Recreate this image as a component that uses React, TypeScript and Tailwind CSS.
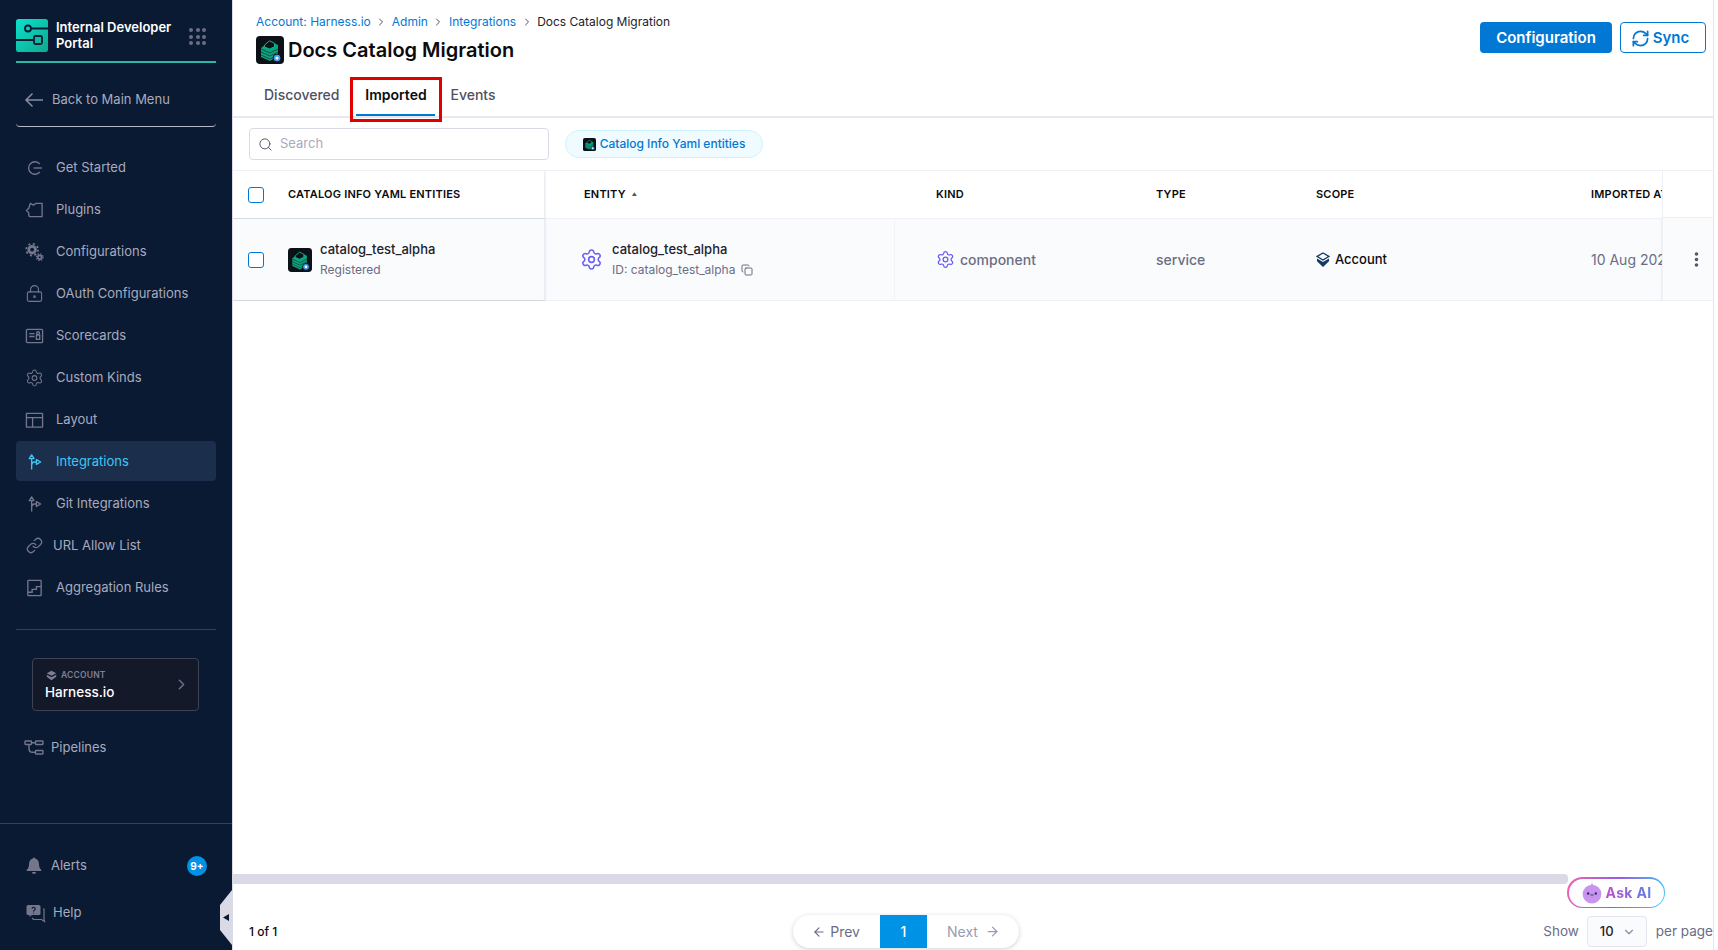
import type { ReactNode } from 'react';
import { ArrowLeft, ArrowRight, ChevronDown, ChevronRight, Copy, EllipsisVertical, Link, LockKeyhole, RefreshCw, Search, Settings } from 'lucide-react';

const iconProps = { width: 20, height: 20, viewBox: '0 0 20 20', fill: 'none', stroke: 'currentColor', strokeWidth: 1.4 };

const GetStartedIcon = () => (
  <svg {...iconProps}>
    <path d="M15.500 5.800A6.600 6.600 0 1 0 15.500 14.200" />
    <path d="M9 10h9" />
  </svg>
);

const PluginIcon = () => (
  <svg {...iconProps}>
    <path d="M5.500 3l3.500 1.800L11.500 3H18v14H5.500A1.500 1.500 0 0 1 4 15.500V13L1.500 10.500 4 8.200z" strokeLinejoin="round" />
  </svg>
);

const CogsIcon = () => (
  <svg width="20" height="20" viewBox="0 0 20 20" fill="none" stroke="currentColor">
    <circle cx="7.500" cy="7.500" r="3.500" strokeWidth="3" />
    <circle cx="7.500" cy="7.500" r="6.200" strokeWidth="1.900" strokeDasharray="2.200 2.670" />
    <circle cx="15.500" cy="15.500" r="2" strokeWidth="1.800" />
    <circle cx="15.500" cy="15.500" r="3.500" strokeWidth="1.400" strokeDasharray="1.400 1.350" />
  </svg>
);

const ScorecardIcon = () => (
  <svg {...iconProps}>
    <rect x="1.500" y="3" width="17" height="14" rx="1" />
    <path d="M4.500 7.500h5.500M4.500 10.500h5.500" />
    <rect x="12" y="9" width="3.500" height="4.500" />
    <circle cx="13.750" cy="7" r="1.500" />
  </svg>
);

const LayoutIcon = () => (
  <svg {...iconProps}>
    <rect x="1.500" y="3" width="17" height="14.500" rx="0.500" />
    <path d="M1.500 7.500h17M8 7.500v10" />
  </svg>
);

const GitIcon = () => (
  <svg {...iconProps}>
    <path d="M7 18V6.500M7 14c0-2.500 1-4 3-4h2" />
    <path d="M4.500 6.500L7 2.500l2.500 4zM12 7.500l4.500 2.500-4.500 2.500z" strokeLinejoin="round" />
  </svg>
);

const AggregationIcon = () => (
  <svg {...iconProps}>
    <rect x="3" y="2" width="14" height="16" rx="0.500" />
    <path d="M3 14.500h4.500v-3H12v-3h5M6 18v-1M10 18v-1" />
  </svg>
);

const PipelinesIcon = () => (
  <svg {...iconProps}>
    <rect x="1" y="3" width="6.500" height="3.500" rx="0.700" />
    <rect x="11.500" y="3" width="7.500" height="3.500" rx="0.700" />
    <rect x="11.500" y="12.500" width="7.500" height="3.500" rx="0.700" />
    <path d="M7.500 4.750h4M5 6.500v4c0 3 1.500 3.800 3.500 3.800h3" />
  </svg>
);

const BellIcon = () => (
  <svg width="18" height="18" viewBox="0 0 18 18" fill="currentColor">
    <path d="M9 .500a1.300 1.300 0 0 0-1.200 1.100C5.300 2.200 4 4.500 4 7.200c0 3-1 4.500-2.300 5.500v1.300h14.600v-1.300C15 11.700 14 10.200 14 7.200c0-2.700-1.300-5-3.800-5.600A1.300 1.300 0 0 0 9 .500z" />
    <path d="M7 15h4a2 2 0 0 1-4 0z" />
  </svg>
);

const HelpIcon = () => (
  <svg width="20" height="20" viewBox="0 0 20 20" fill="none">
    <path d="M2 2h11a1.500 1.500 0 0 1 1.500 1.500v7A1.500 1.500 0 0 1 13 12H6l-2.500 2v-2H2A1.500 1.500 0 0 1 .500 10.500v-7A1.500 1.500 0 0 1 2 2z" fill="currentColor" />
    <path d="M17 6h1v10l.500 2.500-3-2H7.500L6 15" stroke="currentColor" strokeWidth="1.200" />
    <path d="M6 5.800a1.600 1.600 0 1 1 2.400 1.400c-.6.4-.9.7-.9 1.300M7.500 9.700v.8" stroke="#0a1a33" strokeWidth="1.100" />
  </svg>
);

const ProductLogo = () => (
  <svg width="32" height="33" viewBox="0 0 32 33" fill="none">
    <defs>
      <linearGradient id="logoFill" x1="0" y1="0" x2="1" y2="1">
        <stop offset="0" stopColor="#0ce0cb" />
        <stop offset="1" stopColor="#0ea98f" />
      </linearGradient>
    </defs>
    <rect width="32" height="33" rx="2.500" fill="url(#logoFill)" />
    <circle cx="12" cy="9.500" r="3" stroke="#0a1a33" strokeWidth="1.800" />
    <path d="M15 9.500h17M0 21h18" stroke="#0a1a33" strokeWidth="1.800" />
    <rect x="18" y="17" width="8" height="8" rx="1.500" stroke="#0a1a33" strokeWidth="1.800" />
  </svg>
);

const CatalogIcon = ({ size }: { size: number }) => (
  <svg width={size} height={size} viewBox="0 0 28 28" fill="none">
    <rect width="28" height="28" rx="4" fill="#0c1117" />
    <path d="M5 12l9-7 8 4v11l-8 5-9-4z" fill="#0fa27d" />
    <path d="M5 13l9 4 8-4M5 16l9 4 8-4M5 19l9 4 8-4" stroke="#0b4f44" strokeWidth="0.900" />
    <path d="M8.500 9l5-4.200 5 2.500v3.500l-5 2.200-5-2z" fill="#0c1117" stroke="#12b58d" />
    <circle cx="21" cy="22" r="4" fill="#3d9bf0" stroke="#0c1117" />
    <circle cx="21" cy="22" r="1.500" fill="#ffffff" />
  </svg>
);

const ScopeIcon = () => (
  <svg width="14" height="16" viewBox="0 0 14 16" fill="#123a63">
    <path d="M7 1l6 3.400L7 8 1 4.400z" fill="none" stroke="#123a63" strokeWidth="1.300" />
    <path d="M1 6.500L7 10l6-3.500v2.800L7 15 1 9.300z" />
  </svg>
);

const AccountIcon = () => (
  <svg width="11" height="11" viewBox="0 0 14 14" fill="#7d8093">
    <path d="M7 1l6 3.200L7 7.400 1 4.200z" />
    <path d="M1 6l6 3.200L13 6v2.500L7 13 1 8.500z" />
  </svg>
);

const AskAiIcon = () => (
  <svg width="22" height="22" viewBox="0 0 20 20">
    <path d="M10 .500l1.200 3H8.800z" fill="#c99af0" />
    <circle cx="10" cy="11" r="8.500" fill="#c795ee" />
    <circle cx="6.500" cy="10.500" r="1.100" fill="#3a2a6a" />
    <circle cx="13.500" cy="10.500" r="1.100" fill="#3a2a6a" />
    <path d="M8.500 11.800h3" stroke="#3a2a6a" strokeWidth="0.800" />
  </svg>
);

const navItems: { label: string; icon: ReactNode; gap?: string; active?: boolean }[] = [
  { label: 'Get Started', icon: <GetStartedIcon /> },
  { label: 'Plugins', icon: <PluginIcon /> },
  { label: 'Configurations', icon: <CogsIcon /> },
  { label: 'OAuth Configurations', icon: <LockKeyhole size={19} strokeWidth={1.400} /> },
  { label: 'Scorecards', icon: <ScorecardIcon /> },
  { label: 'Custom Kinds', icon: <Settings size={20} strokeWidth={1.300} /> },
  { label: 'Layout', icon: <LayoutIcon /> },
  { label: 'Integrations', icon: <GitIcon />, active: true },
  { label: 'Git Integrations', icon: <GitIcon /> },
  { label: 'URL Allow List', icon: <Link size={17} strokeWidth={1.800} />, gap: 'gap-[9px]' },
  { label: 'Aggregation Rules', icon: <AggregationIcon /> },
];

const headCell = 'flex h-[47px] items-center text-[11px] font-semibold tracking-[0.2px] whitespace-nowrap text-[#0b0b0d]';

const Sidebar = () => (
  <aside className="flex h-[950px] w-[232px] shrink-0 flex-col bg-[#0a1a33] text-[13px] text-[#a8aabd]">
    <div className="mx-4 mt-[19px] flex h-[44px] items-start justify-between border-b-2 border-[#2bb8a3]">
      <div className="flex items-start gap-2">
        <ProductLogo />
        <span className="text-[13px] leading-[16px] font-semibold text-white">Internal Developer<br />Portal</span>
      </div>
      <div className="mt-[9px] mr-[10px] grid grid-cols-3 gap-[2.500px]">
        {[...Array(9).keys()].map((i) => (
          <span key={i} className="h-[4px] w-[4px] rounded-full bg-[#6b6d85]" />
        ))}
      </div>
    </div>
    <div className="mx-4 flex h-[64px] items-center gap-[8px] rounded-b-[4px] border-b border-[#b8b9c8] pt-[11px] pl-[8px]">
      <svg width="20" height="16" viewBox="0 0 20 16" fill="none" stroke="#8a8ca0" strokeWidth="1.500">
        <path d="M19 8H2M8.500 1.500L2 8l6.500 6.500" />
      </svg>
      <span>Back to Main Menu</span>
    </div>
    <nav className="mx-4 mt-[20px] flex flex-col gap-[2px]">
      {navItems.map((item) => (
        <div
          key={item.label}
          className={`flex h-[40px] items-center rounded-[4px] pt-[1px] pl-[9px] ${item.gap ?? 'gap-[12px]'} ${item.active ? 'bg-[#1b2f4d] text-[#3dc7f6]' : ''}`}
        >
          <span className={`flex w-[19px] justify-center ${item.active ? 'text-[#3dc7f6]' : 'text-[#74768c]'}`}>{item.icon}</span>
          <span>{item.label}</span>
        </div>
      ))}
    </nav>
    <div className="mx-4 mt-[22px] h-px bg-[#33405a]" />
    <div className="mx-8 mt-[28px] flex h-[53px] w-[167px] items-center justify-between rounded-[4px] border border-[#3d4354] bg-[#14192a] pr-[8px] pl-[12px]">
      <div className="pt-[1px]">
        <div className="flex items-center gap-[4px] pl-[1px] text-[8.500px] leading-[12px] font-semibold tracking-[0.2px] text-[#7d8093]">
          <AccountIcon />
          ACCOUNT
        </div>
        <div className="mt-[2px] text-[13.500px] leading-[18px] font-medium text-white">Harness.io</div>
      </div>
      <ChevronRight size={17} strokeWidth={2.200} className="text-[#6b6d85]" />
    </div>
    <div className="mx-4 mt-[16px] flex h-[40px] items-center gap-[7px] pt-[1px] pl-[8px]">
      <span className="text-[#74768c]"><PipelinesIcon /></span>
      <span>Pipelines</span>
    </div>
    <div className="mt-auto h-[127px] border-t border-[#33405a] px-4 pt-[22px]">
      <div className="flex h-[40px] items-center gap-[8px] pl-[9px]">
        <span className="text-[#74768c]"><BellIcon /></span>
        <span>Alerts</span>
        <span className="mr-[9px] ml-auto flex h-[20px] w-[20px] items-center justify-center rounded-full bg-[#0092e4] text-[10px] font-bold text-white">9+</span>
      </div>
      <div className="mt-[7px] flex h-[40px] items-center gap-[7px] pl-[10px]">
        <span className="text-[#74768c]"><HelpIcon /></span>
        <span>Help</span>
      </div>
    </div>
  </aside>
);

const Header = () => (
  <header className="flex h-[118px] flex-col border-b-2 border-[#e7e8f0]">
    <div className="flex items-start justify-between pr-[7px] pl-[23px]">
      <div>
        <div className="mt-[14px] flex h-[16px] items-center text-[12px] leading-[16px] text-[#0278d5]">
          <span>Account: Harness.io</span>
          <ChevronRight size={12} className="mx-[4.500px] text-[#4f5162]" />
          <span>Admin</span>
          <ChevronRight size={12} className="mx-[4.500px] text-[#4f5162]" />
          <span>Integrations</span>
          <ChevronRight size={12} className="mx-[4.500px] text-[#4f5162]" />
          <span className="text-[#22222a]">Docs Catalog Migration</span>
        </div>
        <div className="mt-[6px] flex items-center gap-[4px]">
          <CatalogIcon size={28} />
          <h1 className="text-[20px] leading-[28px] font-semibold text-[#0b0b0d]">Docs Catalog Migration</h1>
        </div>
      </div>
      <div className="mt-[22px] flex gap-[8px]">
        <button className="flex h-[31px] w-[132px] items-center justify-center rounded-[4px] bg-[#0278d5] pt-[1px] text-[15px] font-semibold text-white">Configuration</button>
        <button className="flex h-[31px] w-[86px] items-center justify-center gap-[3px] rounded-[4px] border border-[#0278d5] bg-white pt-[1px] pr-[6px] text-[15px] font-semibold text-[#0278d5]">
          <RefreshCw size={19} strokeWidth={2.200} />
          Sync
        </button>
      </div>
    </div>
    <div className="mt-auto flex h-[46px] pl-[16px] text-[14px] font-medium text-[#4f5162]">
      <div className="flex h-full items-center pt-[3px] pr-[17px] pl-[15px]">Discovered</div>
      <div className="relative flex h-full items-end">
        <div className="flex h-[38px] w-[79px] items-center justify-center border-b-2 border-[#0278d5] pb-[4px] font-semibold text-[#0b0b0d]">Imported</div>
        {/* review callout drawn on top of the tab */}
        <div className="absolute top-[7px] -right-[7px] -left-[6px] h-[45px] border-[3px] border-[#e00000]" />
      </div>
      <div className="flex h-full items-center pt-[3px] pl-[15px]">Events</div>
    </div>
  </header>
);

const FilterBar = () => (
  <div className="flex h-[52px] items-center gap-[16px] pl-[16px]">
    <div className="flex h-[32px] w-[300px] items-center gap-[7px] rounded-[4px] border border-[#d9dae5] pl-[8px] text-[13px] text-[#a8aabd]">
      <Search size={15} strokeWidth={1.500} className="text-[#4f5162]" />
      Search
    </div>
    <div className="flex h-[28px] w-[198px] items-center justify-center gap-[4px] rounded-full border border-[#cdf4fe] bg-[#effbff] text-[12px] font-medium text-[#0278d5]">
      <CatalogIcon size={13} />
      Catalog Info Yaml entities
    </div>
  </div>
);

const Checkbox = () => <span className="block h-[16px] w-[16px] shrink-0 rounded-[3px] border border-[#0278d5] bg-white" />;

const EntityTable = () => (
  <div className="relative overflow-hidden border-t border-[#eef0f6]">
    <div className="grid grid-cols-[312px_391px_220px_160px_275px_1fr] items-center">
      <div className={`${headCell} z-10 gap-[24px] border-r border-[#ececf3] bg-white pl-[15px] shadow-[0_1px_2px_rgba(96,97,112,0.2)]`}>
        <Checkbox />
        CATALOG INFO YAML ENTITIES
      </div>
      <div className={`${headCell} gap-[6px] pl-[39px]`}>
        ENTITY <span className="text-[5px] text-[#4f5162]">▲</span>
      </div>
      <div className={headCell}>KIND</div>
      <div className={headCell}>TYPE</div>
      <div className={headCell}>SCOPE</div>
      <div className={headCell}>IMPORTED AT</div>
    </div>
    <div className="grid h-[83px] grid-cols-[312px_391px_220px_160px_275px_1fr] items-center border-y border-[#eef0f6] bg-[#fafbfd]">
      <div className="z-10 flex h-full items-center gap-[24px] border-r border-[#ececf3] bg-[#fafbfd] pl-[15px] shadow-[0_1px_2px_rgba(96,97,112,0.25)]">
        <Checkbox />
        <div className="flex items-center gap-[8px]">
          <CatalogIcon size={24} />
          <div className="pb-[2px]">
            <div className="text-[13px] leading-[20px] font-medium text-[#22222a]">catalog_test_alpha</div>
            <div className="mt-[2px] text-[12px] leading-[18px] text-[#6b6d85]">Registered</div>
          </div>
        </div>
      </div>
      <div className="flex h-full w-[350px] items-center gap-[9px] border-r border-[#f3f4f8] pl-[35px]">
        <Settings size={23} strokeWidth={1.600} className="text-[#6a5cf5]" />
        <div className="pb-[2px]">
          <div className="text-[13px] leading-[20px] font-medium text-[#22222a]">catalog_test_alpha</div>
          <div className="mt-[2px] flex items-center gap-[6px] text-[12px] leading-[18px] text-[#6b6d85]">
            ID: catalog_test_alpha <Copy size={12} />
          </div>
        </div>
      </div>
      <div className="flex items-center gap-[5px] text-[14px] font-medium text-[#6b6d85]">
        <Settings size={19} strokeWidth={1.600} className="text-[#6a5cf5]" />
        component
      </div>
      <div className="text-[14px] font-medium text-[#6b6d85]">service</div>
      <div className="flex items-center gap-[5px] text-[13px] font-medium text-[#0b0b0d]">
        <ScopeIcon />
        Account
      </div>
      <div className="text-[14px] whitespace-nowrap text-[#6b6d85]">10 Aug 2025</div>
    </div>
    {/* sticky actions column sits over the scrolled cells */}
    <div className="absolute top-0 right-0 z-20 flex h-[130px] w-[51px] flex-col bg-white">
      <div className="h-[47px] border-b border-l border-[#eef0f6]" />
      <div className="flex flex-1 items-center justify-center border-b border-l border-[#eef0f6] bg-[#fafbfd] pl-[17px] text-[#4f5162] shadow-[0_1px_2px_rgba(96,97,112,0.2)]">
        <EllipsisVertical size={19} strokeWidth={2.500} />
      </div>
    </div>
  </div>
);

const Footer = () => (
  <div className="relative grid h-[66px] grid-cols-[560px_226px_1fr] items-end pb-[2px]">
    <div className="pb-[8px] pl-[16px] text-[12px] leading-[16px] font-medium text-[#0b0b0d]">1 of 1</div>
    <div className="flex h-[33px] items-stretch overflow-hidden rounded-full bg-white text-[14px] shadow-[0_1px_4px_rgba(96,97,112,0.3)]">
      <div className="flex w-[87px] items-center justify-end gap-[4px] pr-[20px] text-[#6b6d85]">
        <ArrowLeft size={14} />
        Prev
      </div>
      <div className="flex w-[47px] items-center justify-center bg-[#0092e4] font-medium text-white">1</div>
      <div className="flex flex-1 items-center gap-[7px] pl-[20px] text-[#9a9bb0]">
        Next
        <ArrowRight size={15} />
      </div>
    </div>
    <div className="flex items-center justify-end gap-[8px] pb-[1px] text-[13.500px] whitespace-nowrap text-[#6b6d85]">
      Show
      <div className="flex h-[31px] w-[60px] items-center justify-between rounded-[4px] border border-[#e4e5ee] bg-[#fafbfd] pr-[10px] pl-[12px] text-[13px] font-medium text-[#22222a]">
        10 <ChevronDown size={14} className="text-[#8a8ca0]" />
      </div>
      <span className="ml-[1px]">per page</span>
    </div>
    {/* floating assistant button */}
    <div className="absolute -top-[7px] right-[48px] h-[31px] w-[98px] rounded-full bg-[linear-gradient(100deg,#f062b0,#9a5be0_50%,#3dc7f6)] p-[1.500px]">
      <div className="flex h-full items-center justify-center gap-[3px] rounded-full bg-white">
        <AskAiIcon />
        <span className="bg-[linear-gradient(90deg,#c050c8,#5a80e8)] bg-clip-text text-[14px] font-bold tracking-[0.3px] text-transparent">Ask AI</span>
      </div>
    </div>
  </div>
);

const App = () => (
  <div className="relative flex h-[950px] w-[1718px] overflow-hidden bg-white font-['Inter',sans-serif]">
    <Sidebar />
    <main className="flex h-[950px] min-w-0 flex-1 flex-col border-l border-[#d9dae5] pr-[4px]">
      <div className="flex h-full flex-col border-r border-[#e4e5ee]">
        <Header />
        <FilterBar />
        <EntityTable />
        <div className="flex-1" />
        <div className="h-[10px] w-[1335px] rounded-r-[4px] bg-[#d9dae5]" />
        <Footer />
      </div>
    </main>
    {/* sidebar collapse handle overlaps the sidebar edge */}
    <svg className="absolute top-[890px] left-[220px]" width="12" height="55" viewBox="0 0 12 55">
      <polygon points="12,0 12,55 0,40 0,15" fill="#d9dae5" />
      <polygon points="3,27.500 9,24 9,31" fill="#0a1a33" />
    </svg>
  </div>
);

export default App;
